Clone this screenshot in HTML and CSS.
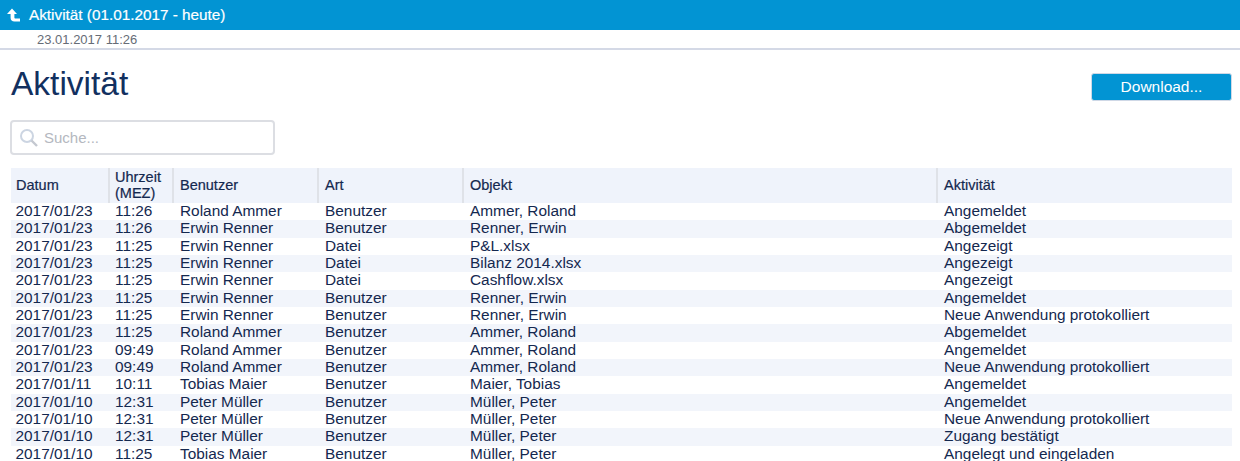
FILE: index.html
```html
<!DOCTYPE html>
<html lang="de">
<head>
    <meta charset="UTF-8">
    <title>Aktivität</title>
    <link rel="stylesheet" href="styles.css">
</head>
<body>
    <div class="topbar">
        <svg class="back-icon" width="13" height="14" viewBox="0 0 13 14">
            <path d="M0 6 L5 0.5 L10 6 H7.4 V9.5 C7.4 10.3 7.8 10.6 8.6 10.6 H13 V13.5 H7.5 C5 13.5 3.6 12 3.6 10 V6 Z" fill="#fff"/>
        </svg>
        <span>Aktivität (01.01.2017 - heute)</span>
    </div>
    <div class="subbar">23.01.2017 11:26</div>

    <div class="page-head">
        <h1>Aktivität</h1>
        <button class="download">Download...</button>
    </div>

    <div class="search">
        <svg width="20" height="20" viewBox="0 0 20 20">
            <circle cx="8" cy="8" r="6" fill="none" stroke="#ccd5e2" stroke-width="2"/>
            <path d="M12.5 12.5 L18 18" stroke="#c4c8d0" stroke-width="2.4"/>
        </svg>
        <span>Suche...</span>
    </div>

    <table class="log">
        <thead>
            <tr>
                <th class="c-date">Datum</th>
                <th class="c-time">Uhrzeit (MEZ)</th>
                <th class="c-user">Benutzer</th>
                <th class="c-type">Art</th>
                <th class="c-obj">Objekt</th>
                <th>Aktivität</th>
            </tr>
        </thead>
        <tbody>
            <tr><td>2017/01/23</td><td>11:26</td><td>Roland Ammer</td><td>Benutzer</td><td>Ammer, Roland</td><td>Angemeldet</td></tr>
            <tr><td>2017/01/23</td><td>11:26</td><td>Erwin Renner</td><td>Benutzer</td><td>Renner, Erwin</td><td>Abgemeldet</td></tr>
            <tr><td>2017/01/23</td><td>11:25</td><td>Erwin Renner</td><td>Datei</td><td>P&amp;L.xlsx</td><td>Angezeigt</td></tr>
            <tr><td>2017/01/23</td><td>11:25</td><td>Erwin Renner</td><td>Datei</td><td>Bilanz 2014.xlsx</td><td>Angezeigt</td></tr>
            <tr><td>2017/01/23</td><td>11:25</td><td>Erwin Renner</td><td>Datei</td><td>Cashflow.xlsx</td><td>Angezeigt</td></tr>
            <tr><td>2017/01/23</td><td>11:25</td><td>Erwin Renner</td><td>Benutzer</td><td>Renner, Erwin</td><td>Angemeldet</td></tr>
            <tr><td>2017/01/23</td><td>11:25</td><td>Erwin Renner</td><td>Benutzer</td><td>Renner, Erwin</td><td>Neue Anwendung protokolliert</td></tr>
            <tr><td>2017/01/23</td><td>11:25</td><td>Roland Ammer</td><td>Benutzer</td><td>Ammer, Roland</td><td>Abgemeldet</td></tr>
            <tr><td>2017/01/23</td><td>09:49</td><td>Roland Ammer</td><td>Benutzer</td><td>Ammer, Roland</td><td>Angemeldet</td></tr>
            <tr><td>2017/01/23</td><td>09:49</td><td>Roland Ammer</td><td>Benutzer</td><td>Ammer, Roland</td><td>Neue Anwendung protokolliert</td></tr>
            <tr><td>2017/01/11</td><td>10:11</td><td>Tobias Maier</td><td>Benutzer</td><td>Maier, Tobias</td><td>Angemeldet</td></tr>
            <tr><td>2017/01/10</td><td>12:31</td><td>Peter Müller</td><td>Benutzer</td><td>Müller, Peter</td><td>Angemeldet</td></tr>
            <tr><td>2017/01/10</td><td>12:31</td><td>Peter Müller</td><td>Benutzer</td><td>Müller, Peter</td><td>Neue Anwendung protokolliert</td></tr>
            <tr><td>2017/01/10</td><td>12:31</td><td>Peter Müller</td><td>Benutzer</td><td>Müller, Peter</td><td>Zugang bestätigt</td></tr>
            <tr><td>2017/01/10</td><td>11:25</td><td>Tobias Maier</td><td>Benutzer</td><td>Müller, Peter</td><td>Angelegt und eingeladen</td></tr>
        </tbody>
    </table>
</body>
</html>
```

FILE: styles.css
```css
html, body {
    height: 100%;
    overflow: hidden;
}
body {
    margin: 0;
    font-family: "Liberation Sans", Arial, sans-serif;
    color: #14284f;
    background: #fff;
}
.topbar {
    display: flex;
    align-items: center;
    gap: 9px;
    height: 30px;
    padding: 0 0 1px 7px;
    box-sizing: border-box;
    background: #0294d3;
    color: #fff;
    font-size: 15.3px;
    -webkit-text-stroke: 0.2px #fff;
}
.subbar {
    height: 20px;
    box-sizing: border-box;
    padding: 2px 0 0 37px;
    border-bottom: 2px solid #d4d9e6;
    font-size: 13px;
    line-height: 16px;
    color: #666c76;
}
.page-head {
    display: flex;
    justify-content: space-between;
    align-items: flex-start;
    padding: 0 8px 0 11px;
}
h1 {
    margin: 14px 0 0;
    font-size: 33.5px;
    line-height: 40px;
    font-weight: normal;
    color: #12305f;
}
.download {
    margin-top: 23px;
    width: 141px;
    height: 28px;
    padding: 0;
    border: 1px solid #cfd8e6;
    border-radius: 3px;
    background: #0294d3;
    color: #fff;
    font-family: inherit;
    font-size: 15.5px;
}
.search {
    display: flex;
    align-items: center;
    gap: 5px;
    width: 265px;
    height: 35px;
    box-sizing: border-box;
    margin: 16px 0 13px 10px;
    padding-left: 7px;
    border: 2px solid #dcdee3;
    border-radius: 4px;
    font-size: 15px;
    color: #b4b8c0;
}
.log {
    width: 1221px;
    margin-left: 11px;
    table-layout: fixed;
    border-collapse: collapse;
    font-size: 15.4px;
}
.log th {
    height: 35px;
    padding: 0 5px 1px;
    box-sizing: border-box;
    background: #eff3fb;
    border-left: 2px solid #dfe2e8;
    text-align: left;
    font-size: 14.5px;
    line-height: 16px;
    font-weight: normal;
    color: #14284f;
    -webkit-text-stroke: 0.2px #14284f;
}
.log th:first-child {
    border-left: none;
}
.log th:nth-child(n+3) {
    padding-left: 6px;
}
.c-date { width: 98px; }
.c-time { width: 64px; }
.c-user { width: 145px; }
.c-type { width: 145px; }
.c-obj { width: 474px; }
.log td {
    height: 17.33px;
    padding: 0 5px 0 7px;
    line-height: 16px;
    vertical-align: top;
    white-space: nowrap;
}
.log td:first-child {
    padding-left: 4.5px;
}
.log td:nth-child(2) {
    padding-left: 6px;
}
.log tbody tr:nth-child(even) {
    background: #f2f5fb;
}
```
